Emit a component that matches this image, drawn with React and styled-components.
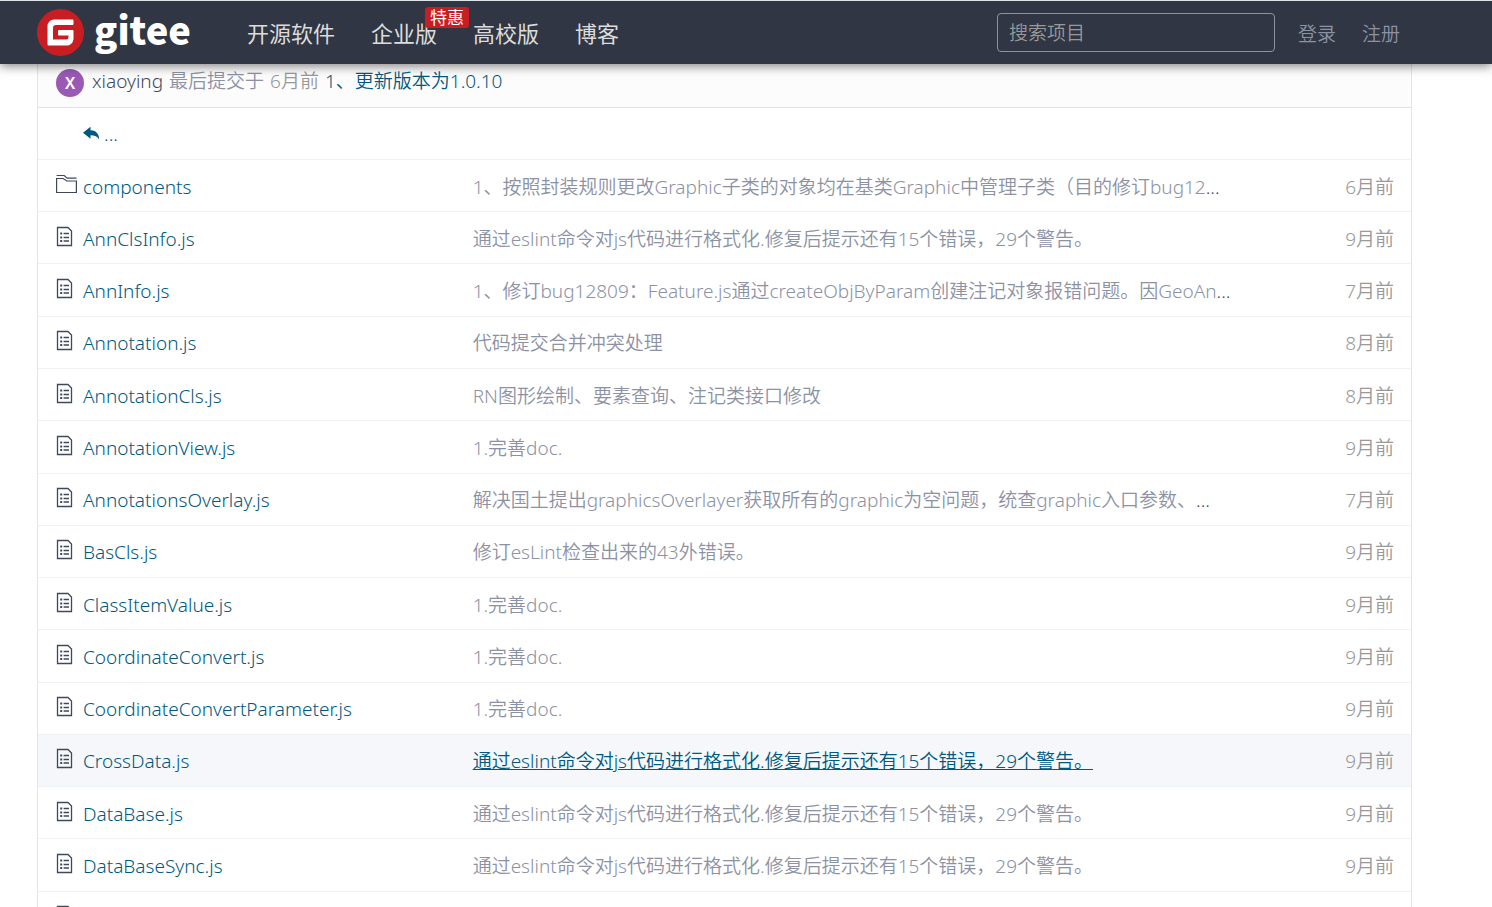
import React from "react";
import styled, { createGlobalStyle } from "styled-components";

const fontStack = `"Noto Sans", "Noto Sans CJK SC", sans-serif`;

const GlobalStyle = createGlobalStyle`
  *, *::before, *::after { box-sizing: border-box; }
  body {
    margin: 0;
    height: 100vh;
    overflow: hidden;
    background: #fff;
    color: #40485b;
    font-family: ${fontStack};
    font-size: 19px;
    font-weight: 350;
  }
  a { color: inherit; text-decoration: none; }
`;

const TopBar = styled.header`
  position: relative;
  z-index: 1;
  display: flex;
  align-items: center;
  height: 64px;
  padding: 0 92px 0 37px;
  border-top: 1px solid #dfe5ea;
  background: #303643;
  box-shadow: 0 2px 10px rgba(0, 0, 0, 0.5);
  white-space: nowrap;
`;

const Brand = styled.a`
  display: flex;
  align-items: center;
  gap: 10px;
  width: 210px;
  height: 63px;
  color: #fff;
`;

const BrandName = styled.span`
  height: 60px;
  font-family: "Noto Sans CJK SC", sans-serif;
  font-size: 38px;
  font-weight: 900;
  line-height: 52px;
`;

const Nav = styled.nav`
  display: flex;
  flex: 1;
  gap: 36px;
  font-size: 22px;
  font-weight: 400;
  color: #dcdcdc;
`;

const NavLink = styled.a`
  position: relative;
  line-height: 32px;
`;

const Badge = styled.span`
  position: absolute;
  top: -10px;
  right: -32px;
  padding: 0 5px;
  border-radius: 3px;
  background: #c71d23;
  color: #fff;
  font-size: 17px;
  line-height: 21px;
`;

const SearchBox = styled.input`
  width: 278px;
  height: 39px;
  margin-right: 23px;
  padding: 0 11px;
  border: 1px solid #8c92a4;
  border-radius: 4px;
  background: transparent;
  color: #fff;
  font: inherit;
  &::placeholder { color: #999; opacity: 1; }
`;

const Account = styled.div`
  display: flex;
  gap: 26px;
  color: #8c92a4;
`;

const Page = styled.main`
  padding: 0 80px 0 37px;
`;

const Panel = styled.section`
  border: 1px solid #e3e5ea;
  border-top: 0;
`;

const CommitBar = styled.div`
  display: flex;
  align-items: flex-start;
  gap: 6px;
  height: 44px;
  padding: 5px 18px 0;
  border-bottom: 1px solid #dfe3e9;
  background: #fcfcfc;
  color: #8c92a4;
  line-height: 24px;
`;

const Avatar = styled.span`
  width: 28px;
  height: 28px;
  margin-right: 2px;
  border-radius: 50%;
  background: #9b59b6;
  color: #fff;
  font-size: 16px;
  font-weight: 600;
  line-height: 28px;
  text-align: center;
`;

const Author = styled.a`
  color: #40485b;
`;

const Muted = styled.span`
  color: #999;
`;

const CommitLink = styled.a`
  color: #005980;
`;

const FileTable = styled.table`
  width: 100%;
  height: 836px;
  border-collapse: collapse;
  table-layout: fixed;
`;

const Row = styled.tr`
  border-bottom: 1px solid #eff2f5;
  background: ${(p) => (p.$active ? "#f5f7fa" : "transparent")};
`;

const NameCell = styled.td`
  width: 31%;
  padding: 0 0 0 18px;
`;

const NameLine = styled.div`
  display: flex;
  align-items: center;
  padding-top: 2px;
  color: #005980;
  line-height: 28px;
`;

const IconSlot = styled.span`
  flex: none;
  width: 27px;
  height: 28px;
  color: #40485b;
  svg { display: block; }
`;

const MessageCell = styled.td`
  padding: 0 0 0 9px;
  overflow: hidden;
  white-space: nowrap;
`;

const Message = styled.a`
  color: ${(p) => (p.$active ? "#005980" : "#8c92a4")};
  text-decoration: ${(p) => (p.$active ? "underline" : "none")};
`;

const AgeCell = styled.td`
  width: 130px;
  padding: 0 17px 0 0;
  color: #999;
  text-align: right;
`;

const UpLink = styled.a`
  display: flex;
  align-items: center;
  gap: 4px;
  padding-left: 27px;
`;

const Logo = () => (
  <svg width="47" height="47" viewBox="0 0 47 47" aria-hidden="true">
    <circle cx="23.5" cy="23.5" r="23.5" fill="#c71d23" />
    <path
      fill="#fff"
      d="M17 10.500h18.500a1 1 0 0 1 1 1v3.500a1 1 0 0 1-1 1H19a3 3 0 0 0-3 3v11.500h13a2.500 2.500 0 0 0 2.500-2.500v-1.500h-9.500a1 1 0 0 1-1-1v-3.500a1 1 0 0 1 1-1h13.500a1 1 0 0 1 1 1V30a7 7 0 0 1-7 6.500H11.500a1 1 0 0 1-1-1V17a6.500 6.500 0 0 1 6.500-6.500z"
    />
  </svg>
);

const FolderIcon = () => (
  <svg width="21" height="24" viewBox="0 0 21 24" fill="none" stroke="currentColor" strokeWidth="1.2" aria-hidden="true">
    <path d="M.6 2.500h7.600l3 2.600h9.300" />
    <path d="M.6 5.500h6.500l3.800 2.500h9.500v11.500H.6z" />
  </svg>
);

const FileIcon = () => (
  <svg width="17" height="24" viewBox="0 0 17 24" fill="none" stroke="currentColor" strokeWidth="1.3" aria-hidden="true">
    <path d="M1.500 2.500h10.500l3.500 3.500v14.500H1.500z" />
    <path d="M4.200 8.500h2M4.200 12.500h2M4.200 16h2" strokeWidth="1.800" />
    <path d="M7.600 8.500h5.400M7.600 12.500h5.400M7.600 16h5.400" />
  </svg>
);

const ReplyIcon = () => (
  <svg width="17" height="16" viewBox="0 0 17 16" fill="currentColor" aria-hidden="true">
    <path d="M0 6.800 7.500.8v3.400c5 0 8.700 3.300 8.700 9.300-1.800-3-4.500-4.200-8.700-4.200v3.500z" />
  </svg>
);

const lint = "通过eslint命令对js代码进行格式化.修复后提示还有15个错误，29个警告。";

const files = [
  { name: "components", folder: true, message: "1、按照封装规则更改Graphic子类的对象均在基类Graphic中管理子类（目的修订bug12", cut: true, age: "6月前" },
  { name: "AnnClsInfo.js", message: lint, age: "9月前" },
  { name: "AnnInfo.js", message: "1、修订bug12809：Feature.js通过createObjByParam创建注记对象报错问题。因GeoAn", cut: true, age: "7月前" },
  { name: "Annotation.js", message: "代码提交合并冲突处理", age: "8月前" },
  { name: "AnnotationCls.js", message: "RN图形绘制、要素查询、注记类接口修改", age: "8月前" },
  { name: "AnnotationView.js", message: "1.完善doc.", age: "9月前" },
  { name: "AnnotationsOverlay.js", message: "解决国土提出graphicsOverlayer获取所有的graphic为空问题，统查graphic入口参数、", cut: true, age: "7月前" },
  { name: "BasCls.js", message: "修订esLint检查出来的43外错误。", age: "9月前" },
  { name: "ClassItemValue.js", message: "1.完善doc.", age: "9月前" },
  { name: "CoordinateConvert.js", message: "1.完善doc.", age: "9月前" },
  { name: "CoordinateConvertParameter.js", message: "1.完善doc.", age: "9月前" },
  { name: "CrossData.js", message: lint, age: "9月前", active: true },
  { name: "DataBase.js", message: lint, age: "9月前" },
  { name: "DataBaseSync.js", message: lint, age: "9月前" },
  { name: "", message: "", age: "" },
];

function FileRow({ file }) {
  return (
    <Row $active={file.active}>
      <NameCell>
        <NameLine>
          <IconSlot>{file.folder ? <FolderIcon /> : <FileIcon />}</IconSlot>
          {file.name && <a href="#file">{file.name}</a>}
        </NameLine>
      </NameCell>
      <MessageCell>
        {file.message && <Message href="#commit" $active={file.active}>{file.message}</Message>}
        {file.cut && "..."}
      </MessageCell>
      <AgeCell>{file.age}</AgeCell>
    </Row>
  );
}

export default function App() {
  return (
    <>
      <GlobalStyle />
      <TopBar>
        <Brand href="#home">
          <Logo />
          <BrandName>gitee</BrandName>
        </Brand>
        <Nav>
          <NavLink href="#explore">开源软件</NavLink>
          <NavLink href="#enterprise">
            企业版<Badge>特惠</Badge>
          </NavLink>
          <NavLink href="#education">高校版</NavLink>
          <NavLink href="#blog">博客</NavLink>
        </Nav>
        <SearchBox type="text" placeholder="搜索项目" aria-label="搜索项目" />
        <Account>
          <a href="#login">登录</a>
          <a href="#signup">注册</a>
        </Account>
      </TopBar>
      <Page>
        <Panel>
          <CommitBar>
            <Avatar>X</Avatar>
            <Author href="#author">xiaoying</Author>
            <span>最后提交于</span>
            <Muted>6月前</Muted>
            <CommitLink href="#commit">1、更新版本为1.0.10</CommitLink>
          </CommitBar>
          <FileTable>
            <tbody>
              <Row>
                <NameCell>
                  <NameLine>
                    <UpLink href="#up" aria-label="上级目录">
                      <ReplyIcon />
                      <span>...</span>
                    </UpLink>
                  </NameLine>
                </NameCell>
                <MessageCell />
                <AgeCell />
              </Row>
              {files.map((file, i) => (
                <FileRow key={i} file={file} />
              ))}
            </tbody>
          </FileTable>
        </Panel>
      </Page>
    </>
  );
}
